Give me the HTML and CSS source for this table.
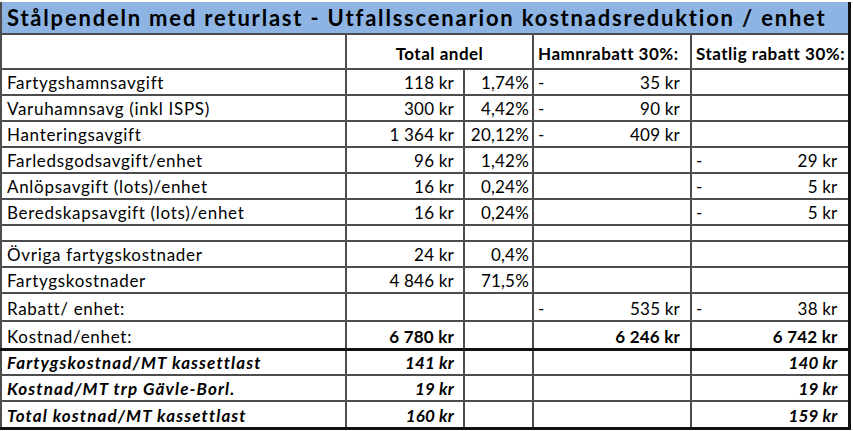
FILE: index.html
```html
<!DOCTYPE html>
<html lang="sv">
<head>
<meta charset="utf-8">
<title>Stålpendeln med returlast</title>
<link rel="stylesheet" href="styles.css">
</head>
<body>
<table class="sheet">
  <colgroup>
    <col class="c-label">
    <col class="c-kr">
    <col class="c-pct">
    <col class="c-hamn">
    <col class="c-stat">
  </colgroup>
  <tr class="r-title">
    <th colspan="5" class="title">Stålpendeln med returlast - Utfallsscenarion kostnadsreduktion / enhet</th>
  </tr>
  <tr class="r-head">
    <th class="blank"></th>
    <th colspan="2" class="h-center">Total andel</th>
    <th class="h-left">Hamnrabatt 30%:</th>
    <th class="h-left">Statlig rabatt 30%:</th>
  </tr>
  <tr class="r-data">
    <td class="label">Fartygshamnsavgift</td>
    <td class="num">118 kr</td>
    <td class="pct">1,74%</td>
    <td class="acc"><span class="dash">-</span><span>35 kr</span></td>
    <td></td>
  </tr>
  <tr class="r-data">
    <td class="label">Varuhamnsavg (inkl ISPS)</td>
    <td class="num">300 kr</td>
    <td class="pct">4,42%</td>
    <td class="acc"><span class="dash">-</span><span>90 kr</span></td>
    <td></td>
  </tr>
  <tr class="r-data">
    <td class="label">Hanteringsavgift</td>
    <td class="num">1&#8239;364 kr</td>
    <td class="pct">20,12%</td>
    <td class="acc"><span class="dash">-</span><span>409 kr</span></td>
    <td></td>
  </tr>
  <tr class="r-data">
    <td class="label">Farledsgodsavgift/enhet</td>
    <td class="num">96 kr</td>
    <td class="pct">1,42%</td>
    <td></td>
    <td class="acc"><span class="dash">-</span><span>29 kr</span></td>
  </tr>
  <tr class="r-data">
    <td class="label">Anlöpsavgift (lots)/enhet</td>
    <td class="num">16 kr</td>
    <td class="pct">0,24%</td>
    <td></td>
    <td class="acc"><span class="dash">-</span><span>5 kr</span></td>
  </tr>
  <tr class="r-data">
    <td class="label">Beredskapsavgift (lots)/enhet</td>
    <td class="num">16 kr</td>
    <td class="pct">0,24%</td>
    <td></td>
    <td class="acc"><span class="dash">-</span><span>5 kr</span></td>
  </tr>
  <tr class="r-gap">
    <td></td><td></td><td></td><td></td><td></td>
  </tr>
  <tr class="r-data">
    <td class="label">Övriga fartygskostnader</td>
    <td class="num">24 kr</td>
    <td class="pct">0,4%</td>
    <td></td>
    <td></td>
  </tr>
  <tr class="r-data">
    <td class="label">Fartygskostnader</td>
    <td class="num">4&#8239;846 kr</td>
    <td class="pct">71,5%</td>
    <td></td>
    <td></td>
  </tr>
  <tr class="r-data r-rabatt">
    <td class="label">Rabatt/ enhet:</td>
    <td></td>
    <td></td>
    <td class="acc"><span class="dash">-</span><span>535 kr</span></td>
    <td class="acc"><span class="dash">-</span><span>38 kr</span></td>
  </tr>
  <tr class="r-data r-total">
    <td class="label">Kostnad/enhet:</td>
    <td class="num strong">6&#8239;780 kr</td>
    <td></td>
    <td class="acc strong"><span>6&#8239;246 kr</span></td>
    <td class="acc strong"><span>6&#8239;742 kr</span></td>
  </tr>
  <tr class="r-data r-em">
    <td class="label">Fartygskostnad/MT kassettlast</td>
    <td class="num">141 kr</td>
    <td></td>
    <td></td>
    <td class="acc"><span>140 kr</span></td>
  </tr>
  <tr class="r-data r-em">
    <td class="label">Kostnad/MT trp Gävle-Borl.</td>
    <td class="num">19 kr</td>
    <td></td>
    <td></td>
    <td class="acc"><span>19 kr</span></td>
  </tr>
  <tr class="r-data r-em r-last">
    <td class="label">Total kostnad/MT kassettlast</td>
    <td class="num">160 kr</td>
    <td></td>
    <td></td>
    <td class="acc"><span>159 kr</span></td>
  </tr>
</table>
</body>
</html>
```

FILE: styles.css
```css
html, body {
  margin: 0;
  padding: 0;
  background: #ffffff;
}

body {
  font-family: Lato, "Liberation Sans", sans-serif;
  color: #000000;
  padding-top: 2px;
}

.sheet {
  border-collapse: collapse;
  table-layout: fixed;
  width: 850px;
  border-left: 2px solid #1a1a1a;
  border-right: 3px solid #111111;
  border-bottom: 3px solid #111111;
}

.c-label { width: 345px; }
.c-kr    { width: 118px; }
.c-pct   { width: 69px; }
.c-hamn  { width: 158px; }
.c-stat  { width: 158px; }

.sheet th,
.sheet td {
  border: 2px solid #4d4d4d;
  padding: 0;
  white-space: nowrap;
  overflow: hidden;
  font-size: 17px;
  font-weight: normal;
  line-height: 1;
  letter-spacing: 0.2px;
}

/* title */
.r-title { height: 32px; }
.sheet .title {
  background: #8db4e2;
  font-size: 22px;
  font-weight: bold;
  letter-spacing: 1.8px;
  text-align: left;
  padding-left: 5px;
  padding-top: 1px;
  border-top: 0;
  border-bottom: 2px solid #4d4d4d;
}

/* header */
.r-head { height: 35px; }
.sheet .r-head th {
  font-weight: bold;
  letter-spacing: 0.5px;
  vertical-align: bottom;
  padding-bottom: 6px;
}
.sheet .h-center { text-align: center; }
.sheet .h-left { text-align: left; padding-left: 4px; }

/* data rows */
.r-data { height: 26px; }
.r-gap { height: 16px; }

.sheet .label {
  text-align: left;
  padding-left: 5px;
  vertical-align: bottom;
  padding-bottom: 3px;
  letter-spacing: 0.7px;
}

.sheet .num {
  text-align: right;
  padding-right: 9px;
  vertical-align: bottom;
  padding-bottom: 3px;
}

.sheet .pct {
  text-align: right;
  padding-right: 3px;
  vertical-align: bottom;
  padding-bottom: 3px;
}

.sheet .acc {
  vertical-align: bottom;
  padding: 0 10px 3px 4px;
  text-align: right;
}

.acc .dash {
  float: left;
}

.sheet .strong { font-weight: bold; }

.r-rabatt { height: 28px; }
.r-total { height: 28px; }
.sheet .r-total td { border-bottom: 3px solid #111111; }

.r-em { height: 26px; }
.sheet .r-em td {
  font-weight: bold;
  font-style: italic;
}
.sheet .r-em .label { letter-spacing: 1.1px; }
.r-last { height: 27px; }
```
